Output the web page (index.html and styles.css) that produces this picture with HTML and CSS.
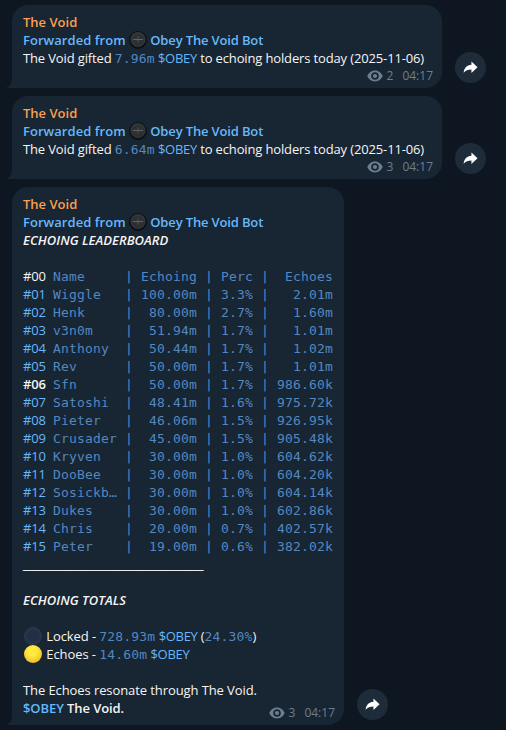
FILE: index.html
```html
<!DOCTYPE html>
<html lang="en">

<head>
    <meta charset="UTF-8">
    <meta name="viewport" content="width=device-width, initial-scale=1.0">
    <title>The Void</title>
    <link rel="stylesheet" href="styles.css">
</head>

<body>
    <svg class="symbols">
        <symbol id="eye" viewBox="0 0 16 12">
            <path fill-rule="evenodd" d="M8 .5C4.2.5 1.4 3 .3 6c1.1 3 3.9 5.400 7.700 5.400S14.600 9 15.700 6C14.600 3 11.800.5 8 .5zM8 2.200a3.800 3.800 0 1 1 0 7.600a3.800 3.800 0 0 1 0-7.600zM8 3.900a2.100 2.100 0 1 0 0 4.200a2.100 2.100 0 0 0 0-4.200z" />
        </symbol>
        <symbol id="share" viewBox="0 0 16 14">
            <path d="M9 .5v3.600C4 4.500 1.200 7.600.6 12.600c2.200-2.500 4.700-3.400 8.400-3.400v3.800L15.600 6.700z" />
        </symbol>
        <symbol id="avatar" viewBox="0 0 18 18">
            <circle cx="9" cy="9" r="9" fill="#0d1013" />
            <circle cx="9" cy="8.500" r="7.600" fill="#34373a" />
            <circle cx="9" cy="9" r="6" fill="#2d3033" />
            <path d="M4 8.500h10" stroke="#6c7074" stroke-width=".8" />
            <path d="M9 5.500v6" stroke="#5a5e62" stroke-width=".8" />
        </symbol>
    </svg>

    <div class="chat">
        <div class="message">
            <div class="bubble">
                <div class="sender">The Void</div>
                <div class="forwarded">Forwarded from <svg class="avatar"><use href="#avatar" /></svg><span class="bot"> Obey The Void Bot</span></div>
                <div class="gift">The Void gifted <code>7.96m</code> <a>$OBEY</a> to echoing holders today (2025-11-06)</div>
                <div class="meta"><svg class="eye"><use href="#eye" /></svg><span class="views">2</span><span>04:17</span></div>
            </div>
            <div class="share"><svg><use href="#share" /></svg></div>
        </div>

        <div class="message">
            <div class="bubble">
                <div class="sender">The Void</div>
                <div class="forwarded">Forwarded from <svg class="avatar"><use href="#avatar" /></svg><span class="bot"> Obey The Void Bot</span></div>
                <div class="gift">The Void gifted <code>6.64m</code> <a>$OBEY</a> to echoing holders today (2025-11-06)</div>
                <div class="meta"><svg class="eye"><use href="#eye" /></svg><span class="views">3</span><span>04:17</span></div>
            </div>
            <div class="share"><svg><use href="#share" /></svg></div>
        </div>

        <div class="message">
            <div class="bubble board">
                <div class="sender">The Void</div>
                <div class="forwarded">Forwarded from <svg class="avatar"><use href="#avatar" /></svg><span class="bot"> Obey The Void Bot</span></div>
                <div class="heading">ECHOING LEADERBOARD</div>
                <br>
                <div class="row"><span>#00</span><code>Name     | Echoing | Perc |  Echoes</code></div>
                <div class="row"><a>#01</a><code>Wiggle   | 100.00m | 3.3% |   2.01m</code></div>
                <div class="row"><a>#02</a><code>Henk     |  80.00m | 2.7% |   1.60m</code></div>
                <div class="row"><a>#03</a><code>v3n0m    |  51.94m | 1.7% |   1.01m</code></div>
                <div class="row"><a>#04</a><code>Anthony  |  50.44m | 1.7% |   1.02m</code></div>
                <div class="row"><a>#05</a><code>Rev      |  50.00m | 1.7% |   1.01m</code></div>
                <div class="row"><b>#06</b><code>Sfn      |  50.00m | 1.7% | 986.60k</code></div>
                <div class="row"><a>#07</a><code>Satoshi  |  48.41m | 1.6% | 975.72k</code></div>
                <div class="row"><a>#08</a><code>Pieter   |  46.06m | 1.5% | 926.95k</code></div>
                <div class="row"><a>#09</a><code>Crusader |  45.00m | 1.5% | 905.48k</code></div>
                <div class="row"><a>#10</a><code>Kryven   |  30.00m | 1.0% | 604.62k</code></div>
                <div class="row"><a>#11</a><code>DooBee   |  30.00m | 1.0% | 604.20k</code></div>
                <div class="row"><a>#12</a><code>Sosickb… |  30.00m | 1.0% | 604.14k</code></div>
                <div class="row"><a>#13</a><code>Dukes    |  30.00m | 1.0% | 602.86k</code></div>
                <div class="row"><a>#14</a><code>Chris    |  20.00m | 0.7% | 402.57k</code></div>
                <div class="row"><a>#15</a><code>Peter    |  19.00m | 0.6% | 382.02k</code></div>
                <div class="line">__________________________</div>
                <br>
                <div class="heading">ECHOING TOTALS</div>
                <br>
                <div class="total"><span class="moon new"></span> Locked - <code>728.93m</code> <a>$OBEY</a> (<code>24.30%</code>)</div>
                <div class="total"><span class="moon full"></span> Echoes - <code>14.60m</code> <a>$OBEY</a></div>
                <br>
                <div class="closing">The Echoes resonate through The Void.</div>
                <div class="closing"><b><a>$OBEY</a> The Void.</b></div>
                <div class="meta"><svg class="eye"><use href="#eye" /></svg><span class="views">3</span><span>04:17</span></div>
            </div>
            <div class="share"><svg><use href="#share" /></svg></div>
        </div>
    </div>
</body>

</html>
```

FILE: styles.css
```css
body {
    margin: 0;
    background-color: #0e1621;
    color: #f5f5f5;
    font-family: "Open Sans", sans-serif;
    font-size: 13px;
    line-height: 18px;
    overflow: hidden;
}

.symbols {
    display: none;
}

.chat {
    display: flex;
    flex-direction: column;
    gap: 8px;
    padding: 5px 12px;
}

.message {
    display: flex;
    align-items: flex-end;
    gap: 13px;
}

.bubble {
    position: relative;
    box-sizing: border-box;
    width: 430px;
    padding: 8px 9px 3px 11px;
    background-color: #182533;
    border-radius: 16px 16px 16px 0;
    white-space: nowrap;
}

/* small tail at the bottom left corner */
.bubble::before {
    content: "";
    position: absolute;
    left: -6px;
    bottom: 0;
    width: 6px;
    height: 8px;
    background: radial-gradient(ellipse 6px 8px at 0 0, transparent 90%, #182533 100%);
}

.board {
    width: 332px;
    padding-bottom: 8px;
}

.sender {
    color: #fc9f50;
    font-weight: 600;
}

.forwarded {
    display: flex;
    white-space: pre;
    color: #66b8fa;
    font-weight: 600;
    letter-spacing: 0.05px;
}

.bot {
    letter-spacing: -0.15px;
}

.avatar {
    width: 18px;
    height: 18px;
}

a {
    color: #66b8fa;
}

b {
    font-weight: 600;
}

code {
    font-family: "DejaVu Sans Mono", monospace;
    font-size: 13px;
    line-height: 1;
    letter-spacing: 0.17px;
    color: #5288c1;
    white-space: pre;
}

.gift {
    letter-spacing: -0.14px;
}

.gift a,
.total a {
    letter-spacing: -0.3px;
}

.total,
.closing {
    letter-spacing: -0.09px;
}

.heading {
    font-weight: 600;
    font-style: italic;
    letter-spacing: 0.04px;
}

.row {
    display: flex;
    align-items: baseline;
    height: 18px;
}

.row > :first-child {
    width: 30px;
    letter-spacing: -0.15px;
}

.row > b {
    letter-spacing: -0.6px;
}

.line {
    font-family: "Liberation Sans", sans-serif;
    letter-spacing: -0.3px;
    color: #fff;
}

.moon {
    display: inline-block;
    width: 18px;
    height: 18px;
    margin: 0 1px;
    border-radius: 50%;
    vertical-align: top;
}

.new {
    background: radial-gradient(circle at 50% 50%, #232e45 40%, #2c384f 75%);
}

.full {
    background: radial-gradient(circle at 45% 35%, #ffe83f 30%, #edb522 85%);
}

.meta {
    display: flex;
    justify-content: flex-end;
    align-items: center;
    height: 18px;
    color: #6d7f8f;
    font-size: 12px;
}

.board .meta {
    margin-top: -13px;
    margin-bottom: -5px;
}

.eye {
    width: 16px;
    height: 12px;
    margin-right: 4px;
    fill: #6d7f8f;
}

.views {
    margin-right: 9px;
}

.share {
    display: flex;
    align-items: center;
    justify-content: center;
    width: 31px;
    height: 31px;
    margin-bottom: 5px;
    border-radius: 50%;
    background-color: #1e2c3a;
}

.share svg {
    width: 15px;
    height: 13px;
    margin-right: 1px;
    fill: #fff;
}
```
